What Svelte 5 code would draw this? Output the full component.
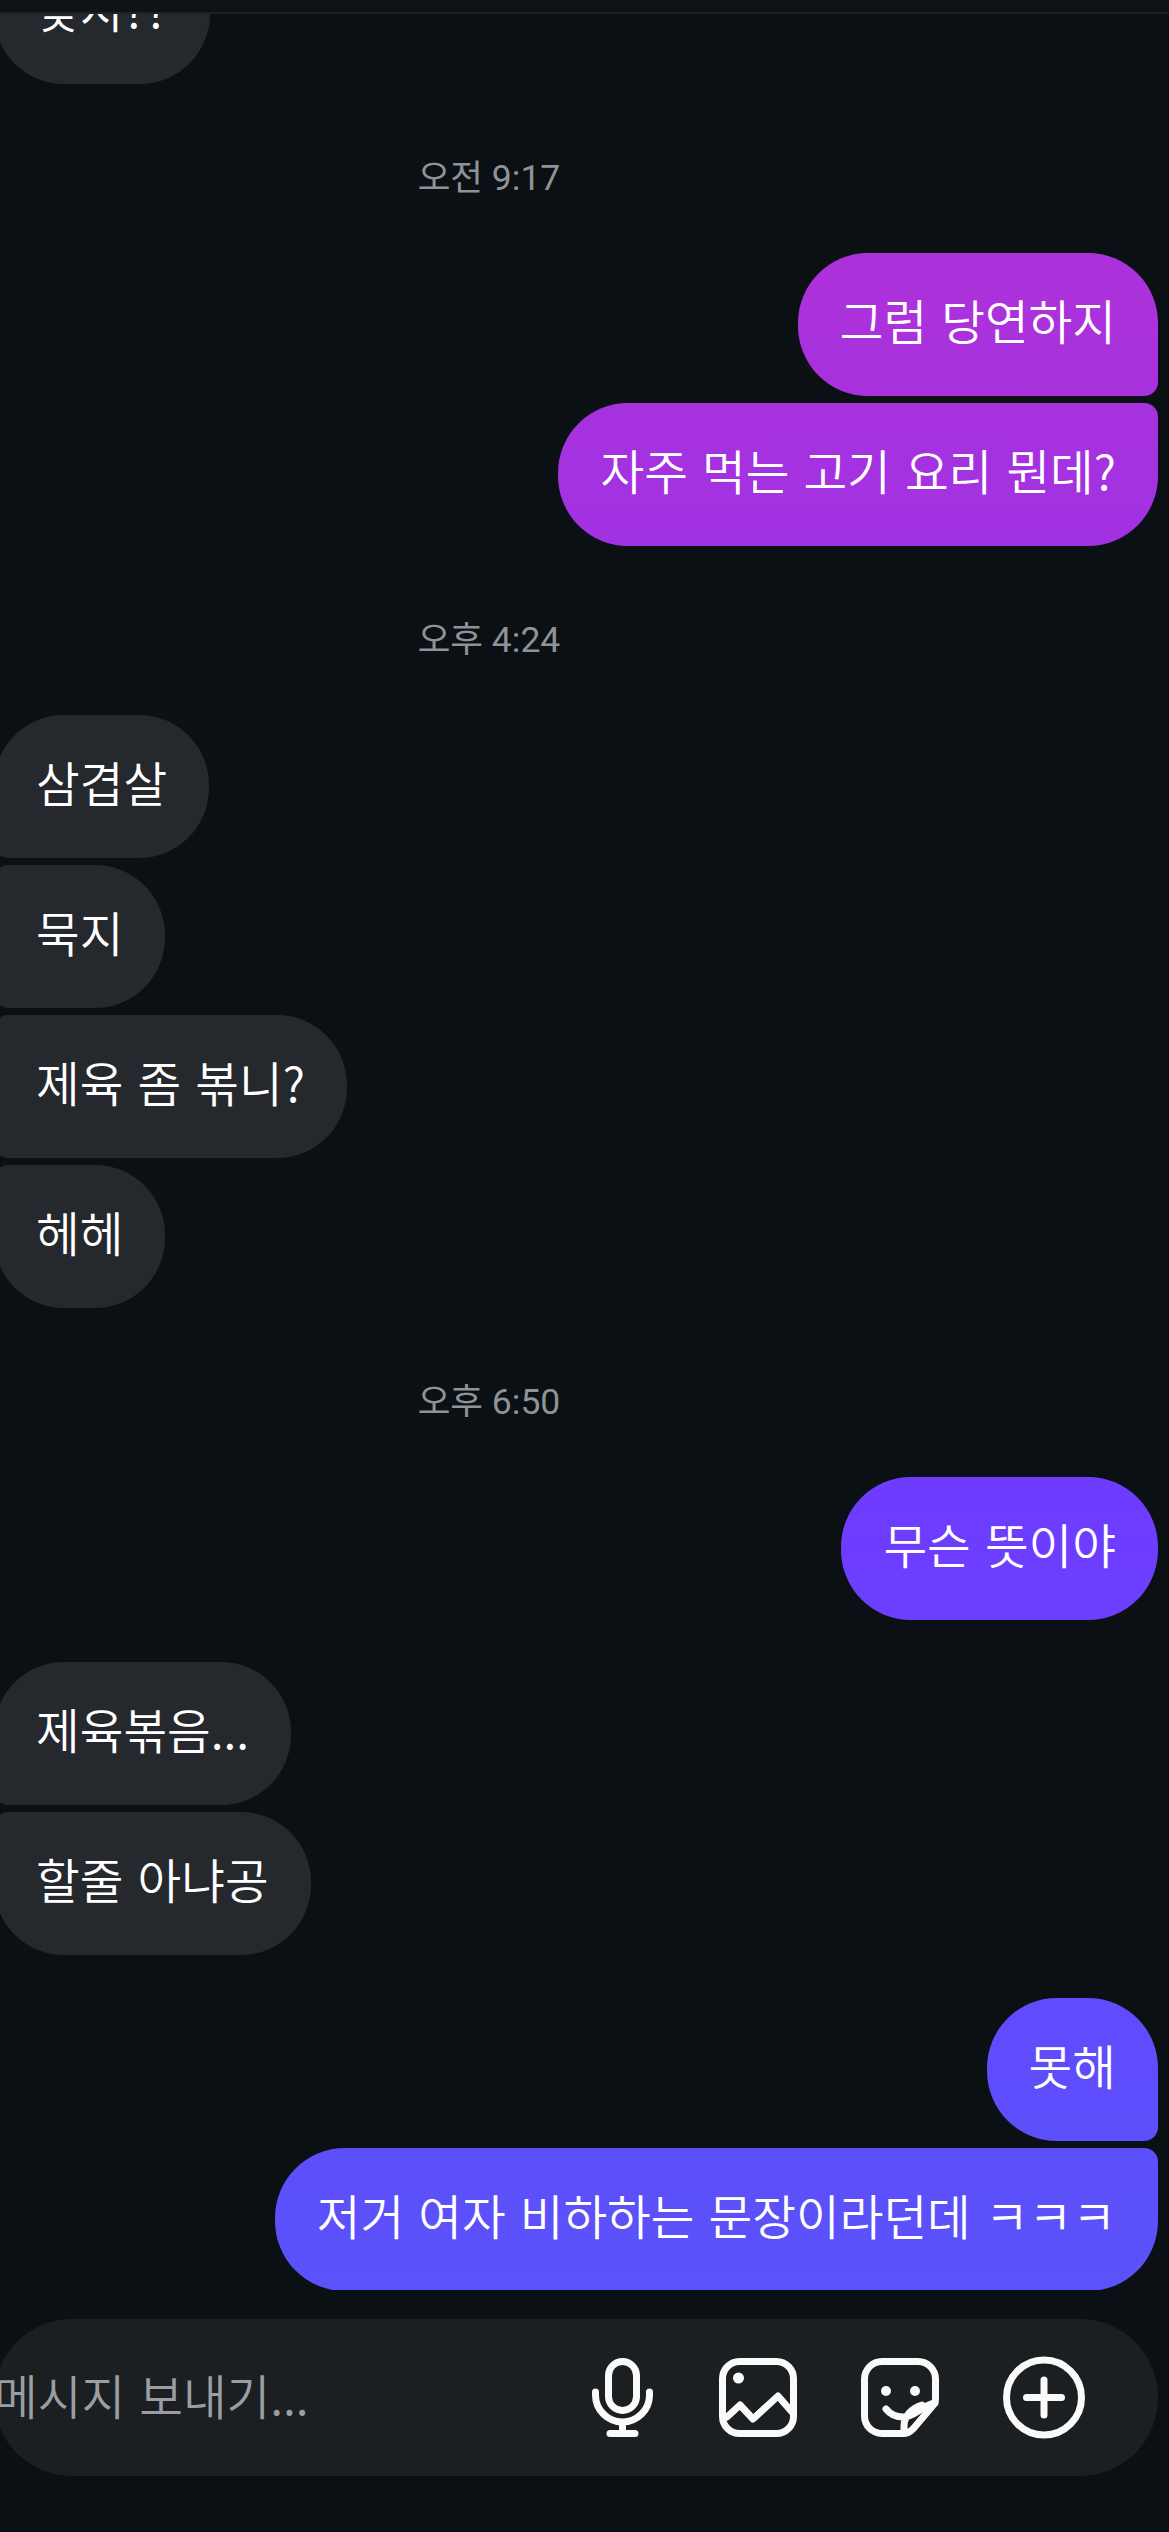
<script lang="ts">
	type Item =
		| { kind: 'time'; text: string }
		| { kind: 'group'; from: 'me' | 'them'; texts: string[] };

	const items: Item[] = [
		{ kind: 'group', from: 'them', texts: ['맞지??'] },
		{ kind: 'time', text: '오전 9:17' },
		{ kind: 'group', from: 'me', texts: ['그럼 당연하지', '자주 먹는 고기 요리 뭔데?'] },
		{ kind: 'time', text: '오후 4:24' },
		{ kind: 'group', from: 'them', texts: ['삼겹살', '묵지', '제육 좀 볶니?', '헤헤'] },
		{ kind: 'time', text: '오후 6:50' },
		{ kind: 'group', from: 'me', texts: ['무슨 뜻이야'] },
		{ kind: 'group', from: 'them', texts: ['제육볶음...', '할줄 아냐공'] },
		{ kind: 'group', from: 'me', texts: ['못해', '저거 여자 비하하는 문장이라던데 ㅋㅋㅋ'] }
	];
</script>

<div class="screen">
	<div class="topbar"></div>

	<div class="thread">
		{#each items as item}
			{#if item.kind === 'time'}
				<div class="time">{item.text}</div>
			{:else}
				<div class="group {item.from}">
					{#each item.texts as text}
						<div class="bubble">{text}</div>
					{/each}
				</div>
			{/if}
		{/each}
	</div>

	<div class="composer">
		<span class="placeholder">메시지 보내기...</span>
		<div class="actions">
			<svg class="mic" width="61" height="79" viewBox="0 0 61 79">
				<rect x="16.5" y="3.5" width="28" height="49" rx="14" />
				<path d="M3.5 34v3a27 27 0 0 0 54 0v-3M30.5 64v11.5M18 75.5h25" />
			</svg>
			<svg width="78" height="79" viewBox="0 0 78 79">
				<rect x="3.5" y="3.5" width="71" height="72" rx="17" />
				<circle class="dot" cx="19.5" cy="20" r="5.5" />
				<path d="M8 59l13-12 13 14 25-23 14 16" />
			</svg>
			<svg width="78" height="79" viewBox="0 0 78 79">
				<path d="M21 3.5h36A17.5 17.5 0 0 1 74.5 21v20c0 3-1 5-3 7L52 71c-3 3-6 4.5-10 4.5H21A17.5 17.5 0 0 1 3.5 58V21A17.5 17.5 0 0 1 21 3.5z" />
				<circle class="dot" cx="25" cy="33" r="5" />
				<circle class="dot" cx="54" cy="33" r="5" />
				<path d="M25 51c4 5 10 8 17 8 12 0 18-11 32-14M43 75v-7c0-10 8-18 18-21" />
			</svg>
			<svg width="82" height="83" viewBox="0 0 82 83">
				<circle cx="41" cy="41.5" r="37.5" />
				<path d="M23.5 41.5h35M41 24v35" />
			</svg>
		</div>
	</div>
</div>

<style>
	:global(body) {
		background: #0b1014;
	}

	.screen {
		display: flex;
		flex-direction: column;
		height: 2532px;
		overflow: hidden;
		font-family: 'Noto Sans CJK KR', 'Noto Sans', sans-serif;
		font-weight: 350;
		color: #fff;
		background: #0b1014;
	}

	.topbar {
		flex: none;
		box-sizing: border-box;
		height: 14px;
		background: #0d1317;
		border-bottom: 2px solid #1b2025;
	}

	.thread {
		display: flex;
		flex-direction: column;
		flex: none;
		height: 2276px;
		overflow: hidden;
		padding: 0 11px 0 0;
		margin-left: -6px;
	}

	.group {
		display: flex;
		flex-direction: column;
		gap: 7px;
		margin-top: 42px;
	}

	.group:first-child {
		margin-top: -73px;
	}

	.group:last-child {
		margin-top: 43px;
	}

	.group.me {
		align-items: flex-end;
	}

	.group.them {
		align-items: flex-start;
	}

	.time {
		width: 990px;
		height: 40px;
		margin: 73px 0 56px;
		text-align: center;
		font-family: Roboto, 'Noto Sans CJK KR', sans-serif;
		font-size: 35.5px;
		font-weight: 400;
		line-height: 42px;
		color: #8f9397;
	}

	.time + .group {
		margin-top: 0;
	}

	.bubble {
		box-sizing: border-box;
		height: 143px;
		padding: 0 42px;
		font-size: 47.5px;
		word-spacing: 3.5px;
		line-height: 134px;
		white-space: nowrap;
		border-radius: 70px;
	}

	.them .bubble {
		background: #25282d;
		border-top-left-radius: 14px;
		border-bottom-left-radius: 14px;
	}

	.them .bubble:first-child {
		border-top-left-radius: 70px;
	}

	.them .bubble:last-child {
		border-bottom-left-radius: 70px;
	}

	.me .bubble {
		background-image: linear-gradient(
			to bottom,
			#ad31da 253px,
			#a132e2 546px,
			#6f3bff 1476px,
			#604bfd 2000px,
			#5a52fa 2289px
		);
		background-attachment: fixed;
		border-top-right-radius: 14px;
		border-bottom-right-radius: 14px;
	}

	.me .bubble:first-child {
		border-top-right-radius: 70px;
	}

	.me .bubble:last-child {
		border-bottom-right-radius: 70px;
	}

	.composer {
		display: flex;
		align-items: center;
		justify-content: space-between;
		flex: none;
		box-sizing: border-box;
		height: 157px;
		margin: 29px 11px 0 -6px;
		padding: 0 73px 0 0;
		background: #1b1f21;
		border-radius: 78px;
		overflow: hidden;
	}

	.placeholder {
		padding-bottom: 6px;
		font-size: 47.5px;
		word-spacing: 3.5px;
		color: #9a9da2;
		white-space: nowrap;
	}

	.actions {
		display: flex;
		align-items: center;
		gap: 64px;
	}

	.mic {
		margin-right: 2px;
	}

	svg {
		display: block;
		fill: none;
		stroke: #fafafa;
		stroke-width: 7;
		stroke-linecap: round;
		stroke-linejoin: round;
	}

	svg .dot {
		fill: #fafafa;
		stroke: none;
	}
</style>
